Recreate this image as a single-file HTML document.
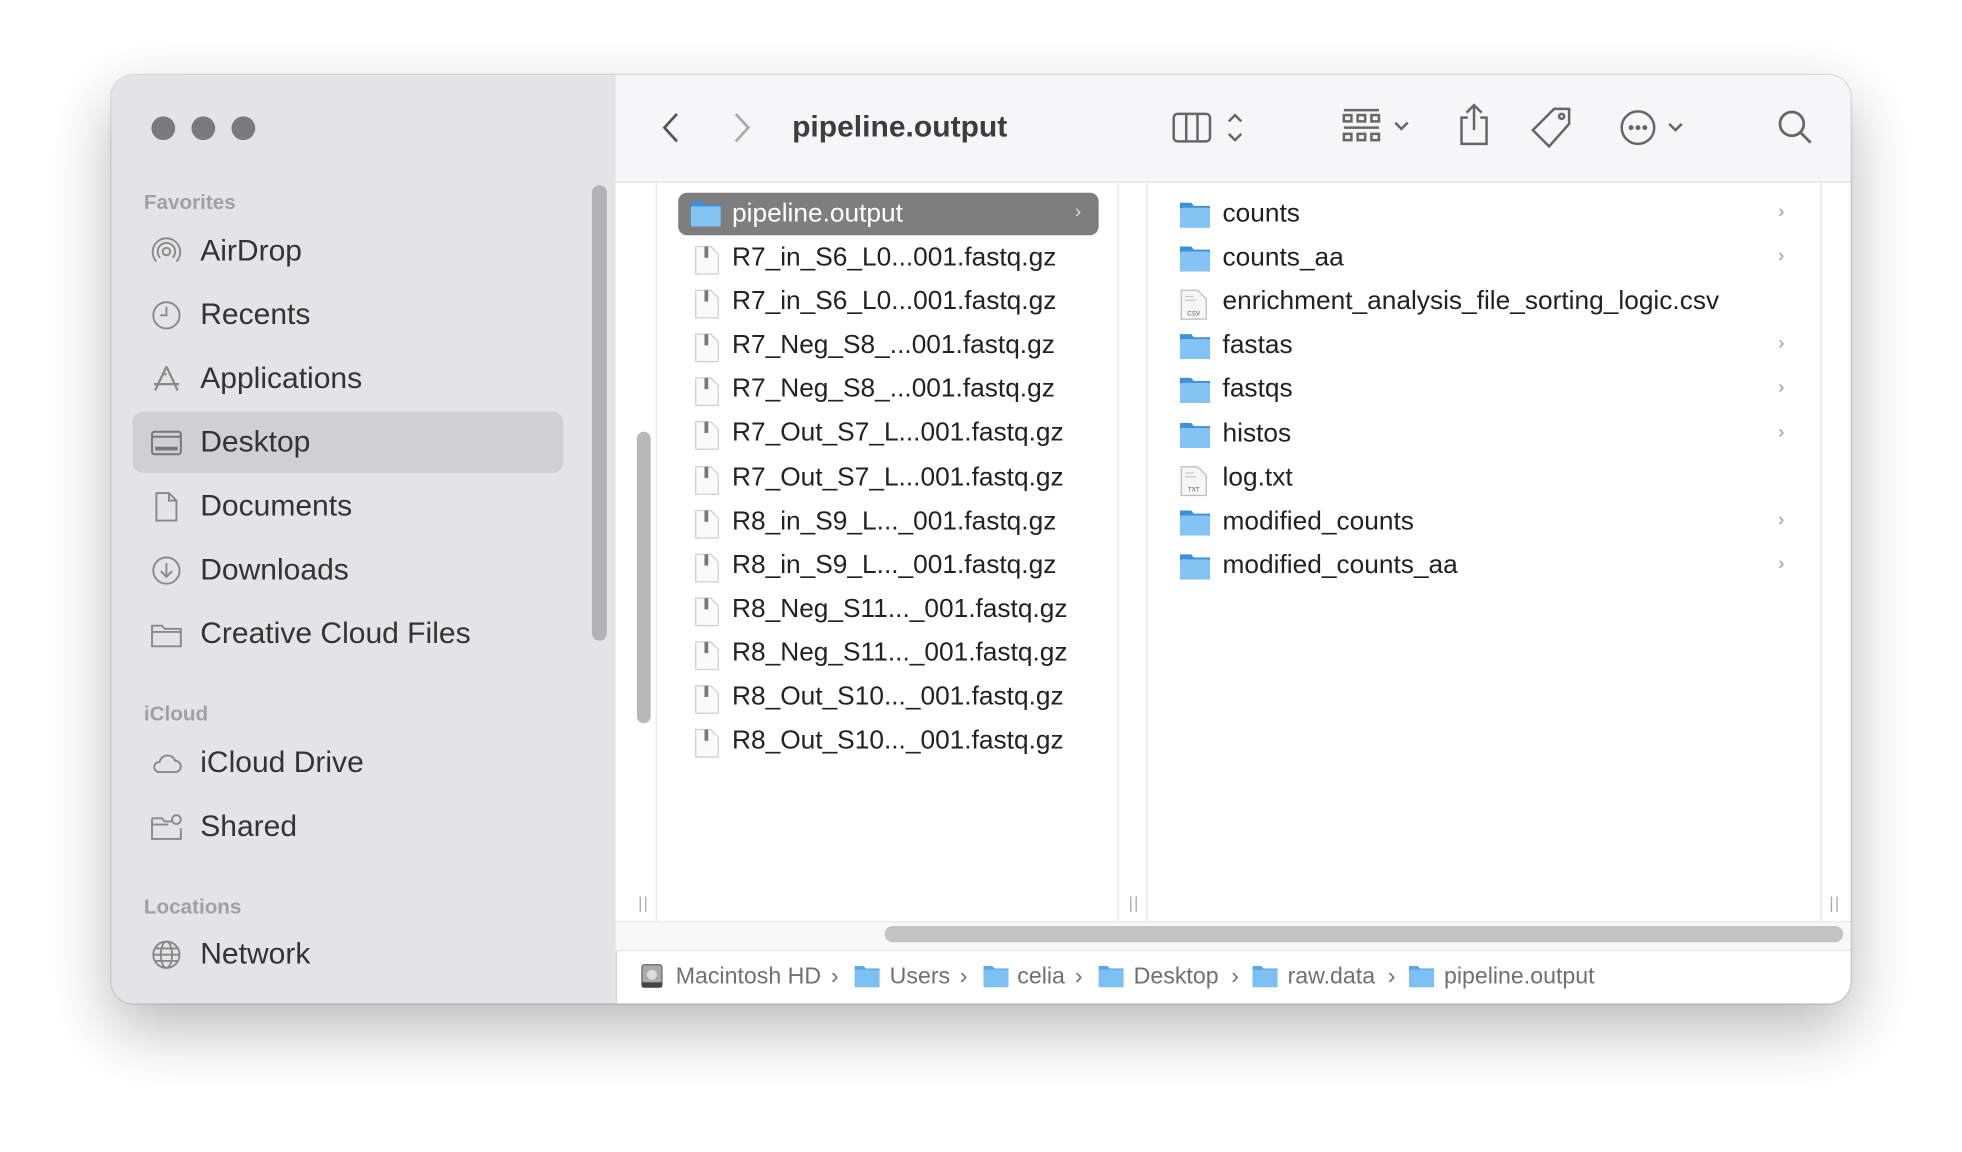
<!DOCTYPE html>
<html><head><meta charset="utf-8"><style>
html,body{margin:0;padding:0;background:#fff;overflow:hidden;width:1962px;height:1152px}
#s{position:absolute;left:0;top:0;width:1568px;height:921px;transform:scale(1.2513);transform-origin:0 0;font-family:"Liberation Sans",sans-serif}
.a{position:absolute}
.win{left:89px;top:60px;width:1390px;height:742px;border-radius:18px;overflow:hidden;background:#fff;box-shadow:0 20px 50px rgba(0,0,0,.28),0 0 0 1px rgba(0,0,0,.12)}
.sb{left:0;top:0;width:403px;height:742px;background:#e4e4e7;border-right:1px solid #d4d4d6}
.tl{width:19px;height:19px;border-radius:50%;background:#7a7a7d;top:33px}
.sec{font-size:16.5px;font-weight:bold;color:#a0a0a4;left:26px}
.it{font-size:24px;color:#333;left:71px;line-height:28px}
.ic{left:31px;width:26px;height:26px}
.tb{left:403px;top:0;width:987px;height:85px;background:#f6f6f8;border-bottom:1px solid #dcdcde}
.row{position:absolute;height:34px;font-size:21px;color:#222;line-height:34px;white-space:nowrap}
.fi{position:absolute;top:7px}
.chev{position:absolute;color:#999;font-size:15px}
.pb{position:absolute;top:709px;font-size:18.5px;color:#707070;white-space:nowrap}
</style></head><body><div id="s">
<div class="a win">
 <div class="a sb">
  <div class="a tl" style="left:32px"></div><div class="a tl" style="left:64px"></div><div class="a tl" style="left:96px"></div>
  <div class="a sec" style="top:93px">Favorites</div>
  <div class="a" style="left:17px;top:269px;width:344px;height:49px;border-radius:8px;background:#d0d0d3"></div>
  <svg class="a ic" style="top:128px" viewBox="0 0 26 26" fill="none" stroke="#888" stroke-width="1.5"><circle cx="13" cy="13" r="3"/><path d="M8 18a7 7 0 1 1 10 0M5 21a11 11 0 1 1 16 0"/></svg>
  <div class="a it" style="top:127px">AirDrop</div>
  <svg class="a ic" style="top:179px" viewBox="0 0 26 26" fill="none" stroke="#888" stroke-width="1.5"><circle cx="13" cy="13" r="10.5"/><path d="M13 6v7H8"/></svg>
  <div class="a it" style="top:178px">Recents</div>
  <svg class="a ic" style="top:230px" viewBox="0 0 26 26" fill="none" stroke="#888" stroke-width="1.8"><path d="M13 3L4 22M13 3l9 19M3 17h20M10 9l3 0"/></svg>
  <div class="a it" style="top:229px">Applications</div>
  <svg class="a ic" style="top:281px" viewBox="0 0 26 26" fill="none" stroke="#777" stroke-width="1.6"><rect x="1.5" y="4" width="23" height="18" rx="2"/><path d="M1.5 8h23"/><rect x="4" y="16" width="18" height="3" fill="#777" stroke="none"/></svg>
  <div class="a it" style="top:280px">Desktop</div>
  <svg class="a ic" style="top:332px" viewBox="0 0 26 26" fill="none" stroke="#888" stroke-width="1.5"><path d="M5 2h10l6 6v16H5z"/><path d="M15 2v6h6"/></svg>
  <div class="a it" style="top:331px">Documents</div>
  <svg class="a ic" style="top:383px" viewBox="0 0 26 26" fill="none" stroke="#888" stroke-width="1.5"><circle cx="13" cy="13" r="10.5"/><path d="M13 7v11M8.5 13.5L13 18l4.5-4.5"/></svg>
  <div class="a it" style="top:382px">Downloads</div>
  <svg class="a ic" style="top:434px" viewBox="0 0 26 26" fill="none" stroke="#888" stroke-width="1.5"><path d="M1.5 6h8l2 2.5h13v14h-23z"/><path d="M1.5 11h23"/></svg>
  <div class="a it" style="top:433px">Creative Cloud Files</div>
  <div class="a sec" style="top:502px">iCloud</div>
  <svg class="a ic" style="top:537px" viewBox="0 0 26 26" fill="none" stroke="#888" stroke-width="1.5"><path d="M7 20h13a4.5 4.5 0 0 0 0-9 6.5 6.5 0 0 0-12.5 1A4 4 0 0 0 7 20z"/></svg>
  <div class="a it" style="top:536px">iCloud Drive</div>
  <svg class="a ic" style="top:588px" viewBox="0 0 26 26" fill="none" stroke="#888" stroke-width="1.5"><path d="M1.5 6h8l2 2.5h6M1.5 6v16.5h23V14M1.5 11h13"/><circle cx="21" cy="7" r="3.5"/></svg>
  <div class="a it" style="top:587px">Shared</div>
  <div class="a sec" style="top:656px">Locations</div>
  <svg class="a ic" style="top:690px" viewBox="0 0 26 26" fill="none" stroke="#888" stroke-width="1.5"><circle cx="13" cy="13" r="10.5"/><ellipse cx="13" cy="13" rx="4.5" ry="10.5"/><path d="M2.5 13h21M4 8h18M4 18h18"/></svg>
  <div class="a it" style="top:689px">Network</div>
  <div class="a" style="left:384px;top:88px;width:12px;height:364px;border-radius:6px;background:#b3b3b5"></div>
 </div>
 <div class="a tb">
  <svg class="a" style="left:36px;top:28px" width="16" height="28" viewBox="0 0 16 28" fill="none" stroke="#555" stroke-width="2.2"><path d="M13 3L3 14l10 11"/></svg>
  <svg class="a" style="left:93px;top:28px" width="16" height="28" viewBox="0 0 16 28" fill="none" stroke="#aaa" stroke-width="2.2"><path d="M3 3l10 11L3 25"/></svg>
  <div class="a" style="left:141px;top:28px;font-size:24px;font-weight:bold;color:#3d3d3d">pipeline.output</div>
  <svg class="a" style="left:444px;top:27px" width="64" height="30" viewBox="0 0 64 30" fill="none" stroke="#666" stroke-width="2"><rect x="2" y="4" width="29" height="22" rx="3"/><path d="M12 4v22M21 4v22M46 10l5-5 5 5M46 20l5 5 5-5"/></svg>
  <svg class="a" style="left:580px;top:25px" width="60" height="34" viewBox="0 0 60 34" fill="none" stroke="#666" stroke-width="2"><path d="M2 3h28M2 17h28"/><rect x="2" y="7" width="6" height="5"/><rect x="13" y="7" width="6" height="5"/><rect x="24" y="7" width="6" height="5"/><rect x="2" y="22" width="6" height="5"/><rect x="13" y="22" width="6" height="5"/><rect x="24" y="22" width="6" height="5"/><path d="M43 13l5 5 5-5"/></svg>
  <svg class="a" style="left:672px;top:22px" width="28" height="36" viewBox="0 0 28 36" fill="none" stroke="#666" stroke-width="2"><path d="M9 12H4v21h20V12h-5M14 2v20M8 8l6-6 6 6"/></svg>
  <svg class="a" style="left:730px;top:24px" width="36" height="36" viewBox="0 0 36 36" fill="none" stroke="#666" stroke-width="2"><path d="M20 3h12v12L16 33 3 20z"/><circle cx="26" cy="9" r="2"/></svg>
  <svg class="a" style="left:802px;top:26px" width="56" height="32" viewBox="0 0 56 32" fill="none" stroke="#666" stroke-width="2"><circle cx="15" cy="16" r="13"/><circle cx="9.5" cy="16" r="1" fill="#666"/><circle cx="15" cy="16" r="1" fill="#666"/><circle cx="20.5" cy="16" r="1" fill="#666"/><path d="M40 13l5 5 5-5"/></svg>
  <svg class="a" style="left:928px;top:27px" width="30" height="30" viewBox="0 0 30 30" fill="none" stroke="#666" stroke-width="2.2"><circle cx="12" cy="12" r="9.5"/><path d="M19 19l8 8"/></svg>
 </div>
 <div class="a" style="left:403px;top:86px;width:987px;height:590px;background:#fff"></div>
 <div class="a" style="left:435px;top:86px;width:1px;height:590px;background:#e6e6e6"></div>
 <div class="a" style="left:804px;top:86px;width:1px;height:590px;background:#e6e6e6"></div>
 <div class="a" style="left:827px;top:86px;width:1px;height:590px;background:#e6e6e6"></div>
 <div class="a" style="left:1366px;top:86px;width:1px;height:590px;background:#e6e6e6"></div>
 <div class="a" style="left:420px;top:285px;width:11px;height:233px;border-radius:6px;background:#b8b8ba"></div>
 <div class="a" style="left:421px;top:654px;color:#aaa;font-size:13px;letter-spacing:1px">||</div>
 <div class="a" style="left:813px;top:654px;color:#aaa;font-size:13px;letter-spacing:1px">||</div>
 <div class="a" style="left:1373px;top:654px;color:#aaa;font-size:13px;letter-spacing:1px">||</div>
 <div class="a" style="left:403px;top:676px;width:987px;height:22px;background:#f8f8f8;border-top:1px solid #e8e8e8;border-bottom:1px solid #e6e6e6"></div>
 <div class="a" style="left:618px;top:680px;width:766px;height:13px;border-radius:7px;background:#c3c3c3"></div>
 <div id="pbx"></div>
 <div class="a" style="left:453px;top:94px;width:336px;height:34px;border-radius:7px;background:#7e7e7e"></div>
 <svg class="a" style="left:463px;top:100px" width="24" height="21" viewBox="0 0 24 21"><path d="M0 1h9l2 2.5h13V21H0z" fill="#3f8fdc"/><rect x="0" y="5" width="24" height="16" rx="1.5" fill="#84c4f4"/></svg>
 <div class="row" style="left:496px;top:94px;color:#fff">pipeline.output</div>
 <div class="chev" style="left:770px;top:101px;color:#ddd">›</div>
</div>
</div>
<script>
var w=document.querySelector('.win');
var doc='<svg class="fi" width="20" height="24" viewBox="0 0 20 24"><path d="M1 1h12l6 6v16H1z" fill="#fafafa" stroke="#cfcfcf"/><rect x="8" y="1" width="3" height="9" fill="#777"/></svg>';
var fol='<svg class="fi" width="24" height="21" viewBox="0 0 24 21"><path d="M0 1h9l2 2.5h13V21H0z" fill="#3f8fdc"/><rect x="0" y="5" width="24" height="16" rx="1.5" fill="#84c4f4"/></svg>';
var sf='<svg width="20" height="18" viewBox="0 0 20 18"><path d="M0 1h7l2 2h11v15H0z" fill="#5aa6e6"/><rect x="0" y="4" width="20" height="14" rx="1" fill="#7cc0f3"/></svg>';
var fil=function(t){return '<svg class="fi" width="22" height="25" viewBox="0 0 22 25"><path d="M1 1h13l7 7v16H1z" fill="#f6f6f6" stroke="#bbb"/><path d="M4 6h7M4 9h9" stroke="#ccc"/><text x="11" y="21" font-size="5" text-anchor="middle" fill="#555" font-family="Liberation Sans">'+t+'</text></svg>';};
var c2=["R7_in_S6_L0...001.fastq.gz","R7_in_S6_L0...001.fastq.gz","R7_Neg_S8_...001.fastq.gz","R7_Neg_S8_...001.fastq.gz","R7_Out_S7_L...001.fastq.gz","R7_Out_S7_L...001.fastq.gz","R8_in_S9_L..._001.fastq.gz","R8_in_S9_L..._001.fastq.gz","R8_Neg_S11..._001.fastq.gz","R8_Neg_S11..._001.fastq.gz","R8_Out_S10..._001.fastq.gz","R8_Out_S10..._001.fastq.gz"];
var h='';
c2.forEach(function(t,i){var y=129+i*35.1;h+='<div class="row" style="left:466px;top:'+y+'px;width:330px">'+doc.replace('class="fi"','class="fi" style="left:0"')+'<span style="position:absolute;left:30px">'+t+'</span></div>';});
var c3=[["counts",1],["counts_aa",1],["enrichment_analysis_file_sorting_logic.csv","CSV"],["fastas",1],["fastqs",1],["histos",1],["log.txt","TXT"],["modified_counts",1],["modified_counts_aa",1]];
c3.forEach(function(r,i){var y=94+i*35.1;var ic=r[1]===1?fol:fil(r[1]);h+='<div class="row" style="left:854px;top:'+y+'px;width:500px"><span style="position:absolute;left:0">'+ic+'</span><span style="position:absolute;left:34px">'+r[0]+'</span></div>';if(r[1]===1)h+='<div class="chev" style="left:1332px;top:'+(y+7)+'px">›</div>';});
// path bar (window-relative x = abs - 89)
var pb=[[540,"Macintosh HD",667],[711,"Users",770],[813,"celia",862],[906,"Desktop",987],[1029,"raw.data",1112],[1154,"pipeline.output",0]];
var icx=[512,683,786,878,1001,1126];
h+='<div class="a" style="left:'+(icx[0]-89)+'px;top:710px"><svg width="18" height="20" viewBox="0 0 18 20"><rect x="1" y="1" width="16" height="18" rx="2" fill="#aaa" stroke="#666"/><circle cx="9" cy="9" r="4" fill="#ddd"/><rect x="1" y="15" width="16" height="4" fill="#444"/></svg></div>';
for(var i=1;i<6;i++)h+='<div class="a" style="left:'+(icx[i]-89)+'px;top:711px">'+sf+'</div>';
pb.forEach(function(p){h+='<div class="pb" style="left:'+(p[0]-89)+'px">'+p[1]+'</div>';if(p[2])h+='<div class="pb" style="left:'+(p[2]-89-3)+'px">›</div>';});
w.insertAdjacentHTML('beforeend',h);
</script>
</body></html>
